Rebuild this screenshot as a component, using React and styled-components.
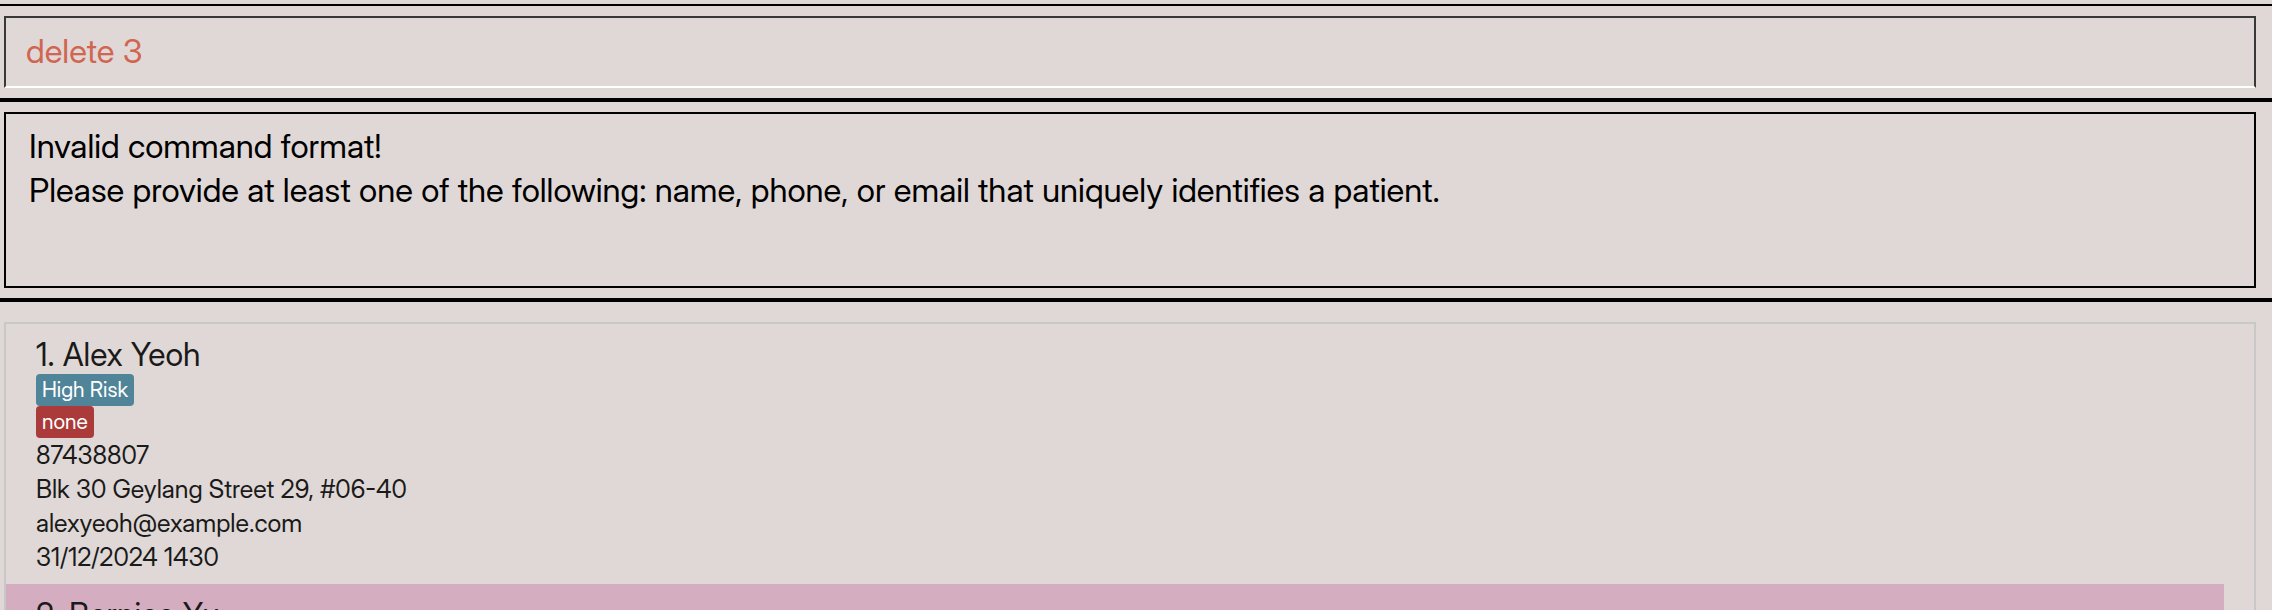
import React, { useState } from "react";
import styled, { createGlobalStyle } from "styled-components";

const GlobalStyle = createGlobalStyle`
  *, *::before, *::after { box-sizing: border-box; }
  body {
    margin: 0;
    background: #e0d8d6;
    font-family: "Inter Display", Inter, "Liberation Sans", sans-serif;
  }
`;

const Window = styled.main`
  display: flex;
  flex-direction: column;
  height: 100vh;
  padding-top: 4px;
  overflow: hidden;
`;

const Pane = styled.section`
  flex: none;
  padding: 10px 16px 10px 4px;
  border-top: ${({ $rule }) => $rule}px solid #000;
`;

const CommandInput = styled.input`
  display: block;
  width: 100%;
  height: 72px;
  padding: 0 20px 2px;
  border: 2px solid #383838;
  border-bottom-color: #fff;
  border-radius: 0;
  outline: none;
  background: transparent;
  color: #d06651;
  font: inherit;
  font-size: 33px;
`;

const ResultDisplay = styled.output`
  display: block;
  height: 176px;
  padding: 10px 23px;
  border: 2px solid #000;
  color: #000;
  font-size: 33px;
  line-height: 44px;
  white-space: pre-line;
`;

const ListPane = styled.section`
  flex: 1;
  min-height: 0;
  padding: 20px 16px 0 4px;
  border-top: 4px solid #000;
`;

const PatientList = styled.ol`
  height: 100%;
  margin: 0;
  padding: 0 30px 0 0;
  border: 2px solid #c8c8c8;
  border-bottom: 0;
  overflow: hidden;
  list-style: none;
`;

const PatientCard = styled.li`
  display: flex;
  flex-direction: column;
  align-items: flex-start;
  padding: 10px 30px;
  background: ${({ $shaded }) => ($shaded ? "#d5adc1" : "transparent")};
  color: #1a1a1a;
`;

const PatientName = styled.h2`
  margin: 0;
  padding-top: 2px;
  font-size: 32px;
  font-weight: 400;
  line-height: 38px;
`;

const Tag = styled.span`
  padding: 0 6px;
  border-radius: 4px;
  background: ${({ $color }) => $color};
  color: #fff;
  font-size: 21px;
  line-height: 32px;
`;

const Detail = styled.p`
  margin: 0;
  font-size: 25px;
  line-height: 34px;
`;

const RESULT =
  "Invalid command format!\nPlease provide at least one of the following: name, phone, or email that uniquely identifies a patient.";

const PATIENTS = [
  {
    name: "Alex Yeoh",
    tags: [
      { label: "High Risk", color: "#508599" },
      { label: "none", color: "#ab3b3b" },
    ],
    details: [
      "87438807",
      "Blk 30 Geylang Street 29, #06-40",
      "alexyeoh@example.com",
      "31/12/2024 1430",
    ],
  },
  { name: "Bernice Yu", tags: [], details: [] },
];

export default function App() {
  const [command, setCommand] = useState("delete 3");

  return (
    <>
      <GlobalStyle />
      <Window>
        <Pane $rule={2}>
          <CommandInput
            aria-label="Command"
            value={command}
            onChange={(event) => setCommand(event.target.value)}
          />
        </Pane>
        <Pane $rule={4}>
          <ResultDisplay>{RESULT}</ResultDisplay>
        </Pane>
        <ListPane>
          <PatientList>
            {PATIENTS.map(({ name, tags, details }, index) => (
              <PatientCard key={name} $shaded={index % 2 === 1}>
                <PatientName>
                  {index + 1}. {name}
                </PatientName>
                {tags.map(({ label, color }) => (
                  <Tag key={label} $color={color}>
                    {label}
                  </Tag>
                ))}
                {details.map((detail) => (
                  <Detail key={detail}>{detail}</Detail>
                ))}
              </PatientCard>
            ))}
          </PatientList>
        </ListPane>
      </Window>
    </>
  );
}
